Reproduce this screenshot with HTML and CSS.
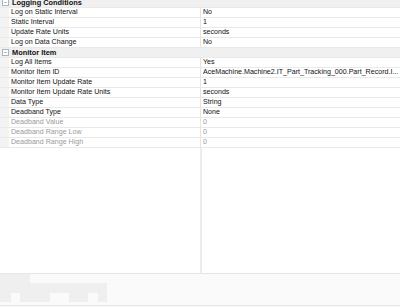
FILE: index.html
```html
<!DOCTYPE html>
<html lang="en">
<head>
    <meta charset="UTF-8">
    <title>Properties</title>
    <link rel="stylesheet" href="styles.css">
</head>
<body>
    <div id="grid">
        <div class="row cat"><span class="toggle">&minus;</span>Logging Conditions</div>
        <div class="row"><div class="name">Log on Static Interval</div><div class="val">No</div></div>
        <div class="row"><div class="name">Static Interval</div><div class="val">1</div></div>
        <div class="row"><div class="name">Update Rate Units</div><div class="val">seconds</div></div>
        <div class="row"><div class="name">Log on Data Change</div><div class="val">No</div></div>
        <div class="row cat"><span class="toggle">&minus;</span>Monitor Item</div>
        <div class="row"><div class="name">Log All Items</div><div class="val">Yes</div></div>
        <div class="row"><div class="name">Monitor Item ID</div><div class="val long">AceMachine.Machine2.IT_Part_Tracking_000.Part_Record.I...</div></div>
        <div class="row"><div class="name">Monitor Item Update Rate</div><div class="val">1</div></div>
        <div class="row"><div class="name">Monitor Item Update Rate Units</div><div class="val">seconds</div></div>
        <div class="row"><div class="name">Data Type</div><div class="val">String</div></div>
        <div class="row"><div class="name">Deadband Type</div><div class="val">None</div></div>
        <div class="row off"><div class="name">Deadband Value</div><div class="val">0</div></div>
        <div class="row off"><div class="name">Deadband Range Low</div><div class="val">0</div></div>
        <div class="row off"><div class="name">Deadband Range High</div><div class="val">0</div></div>
    </div>

    <div id="empty">
        <div class="left"></div>
        <div class="right"></div>
    </div>

    <div id="desc">
        <svg width="108" height="29" viewBox="0 0 108 29">
            <path d="M0 0H30V9H107V28H98V19H88V28H69V19H50V28H20V19H11V28H0Z" fill="#efefef"/>
        </svg>
    </div>
</body>
</html>
```

FILE: styles.css
```css
body {
    margin: 0;
    font-family: "Liberation Sans", Arial, sans-serif;
    font-size: 7.1px;
    color: #111;
    background: #fafafa;
    width: 400px;
    height: 307px;
    overflow: hidden;
}
#grid {
    margin-top: -2px;
    background: #fff;
}
.row {
    display: flex;
    height: 10px;
    line-height: 9px;
    border-bottom: 1px solid #e9e9e9;
    box-sizing: border-box;
    background: linear-gradient(to right, #f3f3f3 0, #f3f3f3 9px, #fff 9px);
}
.row.cat {
    background: #f0f0f0;
    font-weight: bold;
    font-size: 7.4px;
    align-items: center;
}
.toggle {
    display: inline-block;
    width: 5px;
    height: 5px;
    margin: 0 3px 0 2px;
    border: 1px solid #a8b4c4;
    background: #fff;
    color: #3a5a8a;
    font-size: 6px;
    line-height: 5px;
    text-align: center;
    font-weight: normal;
}
.name {
    width: 189px;
    padding-left: 11px;
    border-right: 1px solid #e4e4e4;
    white-space: nowrap;
    overflow: hidden;
}
.val {
    flex: 1;
    padding-left: 2px;
    white-space: nowrap;
    overflow: hidden;
}
.val.long {
    padding-right: 6px;
    text-overflow: clip;
}
.row.off .name, .row.off .val {
    color: #9a9a9a;
}
#empty {
    display: flex;
    height: 125px;
    background: #fff;
    border-bottom: 1px solid #e6e6e6;
}
#empty .left {
    width: 200px;
}
#empty .right {
    flex: 1;
    border-left: 2px solid #ececec;
}
#desc {
    height: 31px;
    background: #fafafa;
    border-bottom: 1px solid #e6e6e6;
    line-height: 0;
}
```
